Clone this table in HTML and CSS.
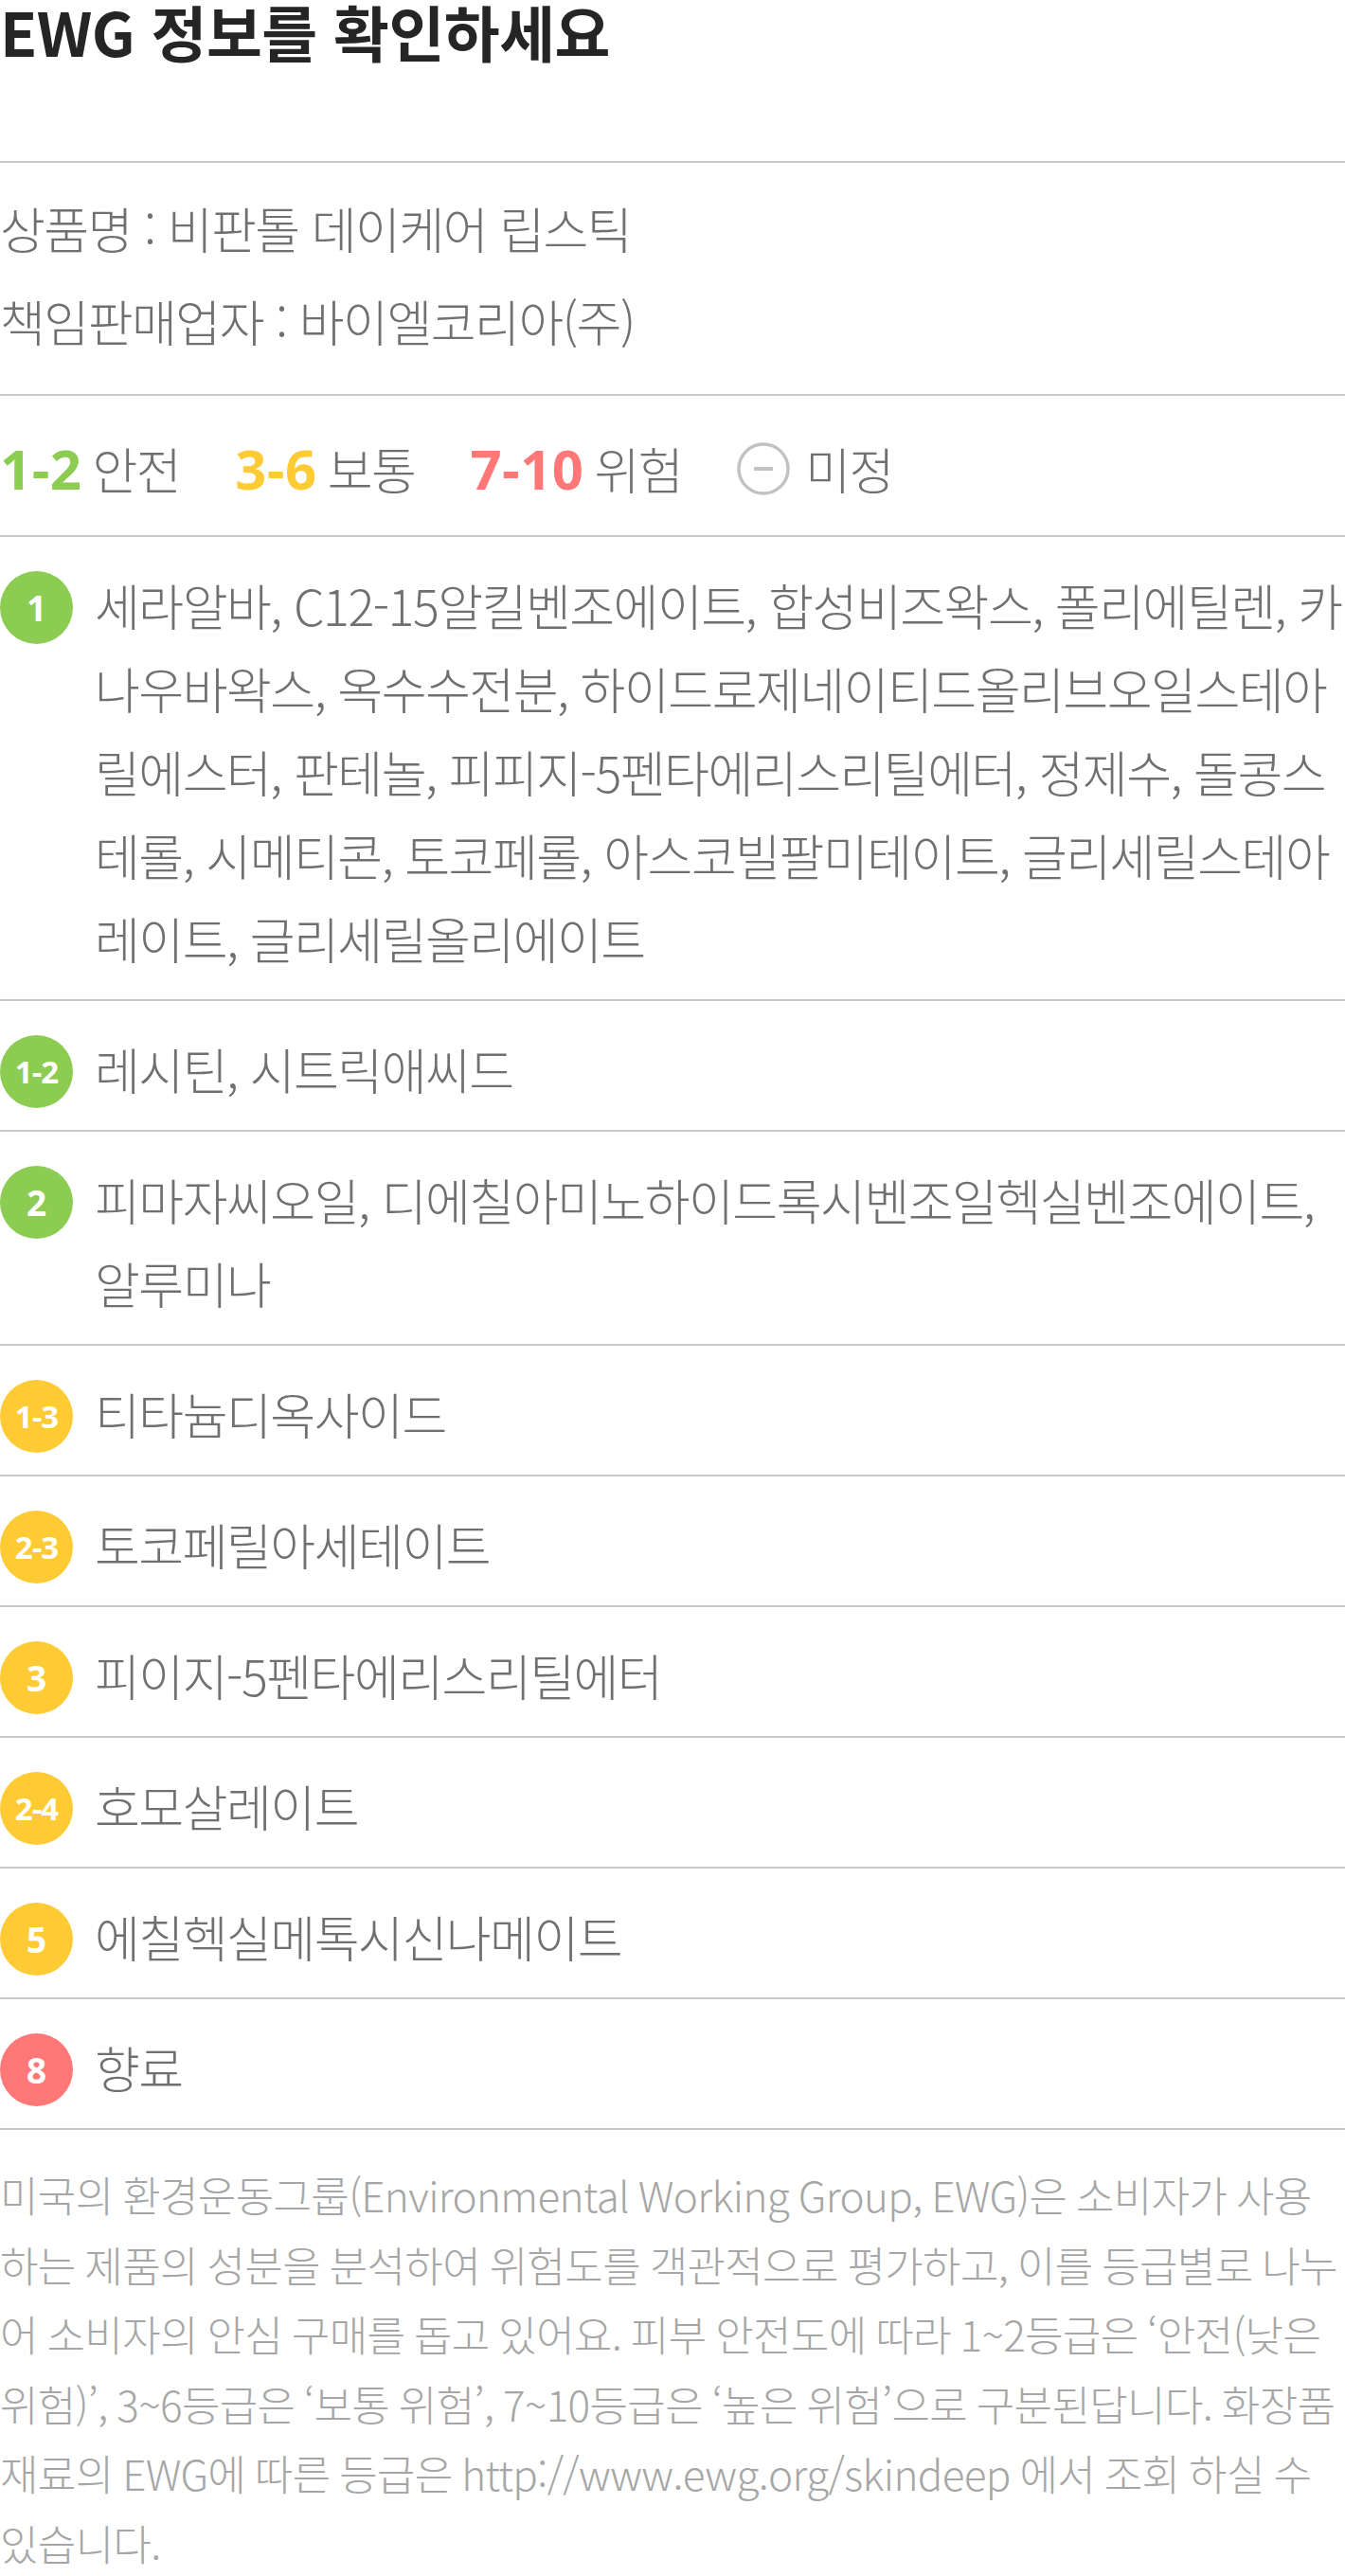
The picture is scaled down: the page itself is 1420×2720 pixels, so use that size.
FILE: index.html
```html
<!DOCTYPE html>
<html lang="ko">
<head>
    <meta charset="UTF-8">
    <meta name="viewport" content="width=device-width, initial-scale=1.0">
    <title>EWG 정보</title>
    <link rel="stylesheet" href="styles.css">
</head>
<body>
    <div class="ewg">
        <h2 class="ewg-title">EWG 정보를 확인하세요</h2>

        <div class="product-info">
            <p>상품명 : 비판톨 데이케어 립스틱</p>
            <p>책임판매업자 : 바이엘코리아(주)</p>
        </div>

        <div class="legend">
            <div class="legend-item"><b class="green">1-2</b><span>안전</span></div>
            <div class="legend-item"><b class="yellow">3-6</b><span>보통</span></div>
            <div class="legend-item"><b class="red">7-10</b><span>위험</span></div>
            <div class="legend-item none">
                <svg width="56" height="56" viewBox="0 0 56 56">
                    <circle cx="28" cy="28" r="26" fill="none" stroke="#c2c2c2" stroke-width="3.5"/>
                    <rect x="18" y="26" width="20" height="4" fill="#c2c2c2"/>
                </svg>
                <span>미정</span>
            </div>
        </div>

        <ul class="ingredients">
            <li>
                <span class="grade green">1</span>
                <p>세라알바, C12-15알킬벤조에이트, 합성비즈왁스, 폴리에틸렌, 카나우바왁스, 옥수수전분, 하이드로제네이티드올리브오일스테아릴에스터, 판테놀, 피피지-5펜타에리스리틸에터, 정제수, 돌콩스테롤, 시메티콘, 토코페롤, 아스코빌팔미테이트, 글리세릴스테아레이트, 글리세릴올리에이트</p>
            </li>
            <li>
                <span class="grade green small">1-2</span>
                <p>레시틴, 시트릭애씨드</p>
            </li>
            <li>
                <span class="grade green">2</span>
                <p>피마자씨오일, 디에칠아미노하이드록시벤조일헥실벤조에이트, 알루미나</p>
            </li>
            <li>
                <span class="grade yellow small">1-3</span>
                <p>티타늄디옥사이드</p>
            </li>
            <li>
                <span class="grade yellow small">2-3</span>
                <p>토코페릴아세테이트</p>
            </li>
            <li>
                <span class="grade yellow">3</span>
                <p>피이지-5펜타에리스리틸에터</p>
            </li>
            <li>
                <span class="grade yellow small">2-4</span>
                <p>호모살레이트</p>
            </li>
            <li>
                <span class="grade yellow">5</span>
                <p>에칠헥실메톡시신나메이트</p>
            </li>
            <li>
                <span class="grade red">8</span>
                <p>향료</p>
            </li>
        </ul>

        <p class="ewg-note">미국의 환경운동그룹(Environmental Working Group, EWG)은 소비자가 사용하는 제품의 성분을 분석하여 위험도를 객관적으로 평가하고, 이를 등급별로 나누어 소비자의 안심 구매를 돕고 있어요. 피부 안전도에 따라 1~2등급은 ‘안전(낮은 위험)’, 3~6등급은 ‘보통 위험’, 7~10등급은 ‘높은 위험’으로 구분된답니다. 화장품 재료의 EWG에 따른 등급은 http://www.ewg.org/skindeep 에서 조회 하실 수 있습니다.</p>
    </div>
</body>
</html>
```

FILE: styles.css
```css
body {
    margin: 0;
    background: #ffffff;
    font-family: "Noto Sans CJK KR", "Noto Sans", sans-serif;
    color: #707070;
}
.ewg {
    width: 1420px;
}
.ewg-title {
    margin: 0;
    height: 170px;
    font-size: 64px;
    line-height: 64px;
    font-weight: 700;
    letter-spacing: -0.5px;
    color: #252525;
}
.product-info {
    border-top: 2px solid #c8c8c8;
    padding: 20px 0 28px;
}
.product-info p {
    margin: 0;
    font-size: 52px;
    line-height: 98px;
    font-weight: 300;
    letter-spacing: -1.5px;
}
.legend {
    border-top: 2px solid #c8c8c8;
    height: 149px;
    display: flex;
    align-items: center;
    gap: 58px;
    padding-top: 6px;
    box-sizing: border-box;
}
.legend-item {
    display: flex;
    align-items: center;
    gap: 11px;
    font-size: 52px;
    font-weight: 300;
    letter-spacing: -1.5px;
}
.legend-item b {
    font-family: "Open Sans", sans-serif;
    font-size: 58px;
    font-weight: 700;
    letter-spacing: 0.5px;
}
.legend-item.none {
    gap: 16px;
}
.legend-item b.green { color: #8ccc52; }
.legend-item b.yellow { color: #ffcb34; }
.legend-item b.red { color: #ff7777; }
.ingredients {
    list-style: none;
    margin: 0;
    padding: 0;
}
.ingredients li {
    border-top: 2px solid #c8c8c8;
    padding: 28px 0 20px;
    display: flex;
    align-items: flex-start;
    gap: 23px;
}
.ingredients p {
    margin: 0;
    flex: 1;
    font-size: 52px;
    line-height: 88px;
    font-weight: 300;
    letter-spacing: -1.5px;
}
.grade {
    flex: none;
    width: 77px;
    height: 77px;
    margin-top: 8px;
    border-radius: 50%;
    display: flex;
    align-items: center;
    justify-content: center;
    font-family: "Open Sans", sans-serif;
    font-size: 37px;
    font-weight: 700;
    color: #ffffff;
}
.grade.small {
    font-size: 33px;
    letter-spacing: -1px;
}
.grade.green { background: #8ccc52; }
.grade.yellow { background: #ffcb34; }
.grade.red { background: #ff7777; }
.ewg-note {
    margin: 0;
    border-top: 2px solid #c8c8c8;
    padding-top: 32px;
    font-size: 44px;
    line-height: 73.5px;
    font-weight: 300;
    letter-spacing: -0.65px;
    word-spacing: -2px;
    color: #a6a6a6;
}
```
